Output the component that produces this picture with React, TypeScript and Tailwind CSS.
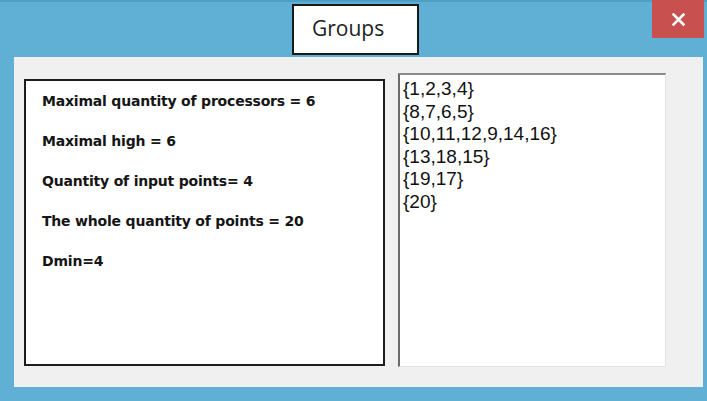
const stats = [
  "Maximal quantity of processors = 6",
  "Maximal high = 6",
  "Quantity of input points= 4",
  "The whole quantity of points = 20",
  "Dmin=4",
];

const groups = ["{1,2,3,4}", "{8,7,6,5}", "{10,11,12,9,14,16}", "{13,18,15}", "{19,17}", "{20}"];

export default function App() {
  return (
    <div className="w-[707px] h-[401px] bg-[#60b0d6] flex flex-col overflow-hidden">
      {/* title bar */}
      <div className="h-[57px] flex items-start border-t-2 border-[#4e9ec6]">
        <div className="ml-[292px] mt-[2px] w-[127px] h-[51px] bg-white border-2 border-[#1a1a1a] flex items-center pl-[18px]">
          <span className="text-[21px] text-[#222] font-['Open_Sans',sans-serif] leading-none -mt-[2px]">Groups</span>
        </div>
        <button className="ml-auto mr-[3px] -mt-[2px] w-[52px] h-[38px] bg-[#c8504e] flex items-center justify-center">
          <svg width="13" height="13" viewBox="0 0 13 13">
            <path d="M1.5 1.5 L11.5 11.5 M11.5 1.5 L1.5 11.5" stroke="white" strokeWidth="2.6" strokeLinecap="square" />
          </svg>
        </button>
      </div>

      {/* client area */}
      <div className="ml-[14px] mr-[4px] h-[330px] bg-[#f0f0f0] flex items-start">
        <div className="ml-[10px] mt-[22px] w-[361px] h-[287px] bg-white border-2 border-[#1c1c1c] pl-[16px] pt-[10px] flex flex-col">
          {stats.map((s) => (
            <p key={s} className="h-[40px] leading-[20px] text-[14px] font-bold tracking-[-0.2px] text-[#151515] font-['DejaVu_Sans',sans-serif]">
              {s}
            </p>
          ))}
        </div>
        <div className="ml-[13px] mt-[16px] w-[268px] h-[294px] bg-white border-l-2 border-t-2 border-r border-b border-l-[#6b6b6b] border-t-[#8a8a8a] border-r-[#e2e2e2] border-b-[#e2e2e2] pl-[3px] pt-[3px]">
          {groups.map((g) => (
            <div key={g} className="h-[22.5px] leading-[22px] text-[19px] text-[#111] font-['Liberation_Sans',sans-serif]">
              {g}
            </div>
          ))}
        </div>
      </div>
    </div>
  );
}
